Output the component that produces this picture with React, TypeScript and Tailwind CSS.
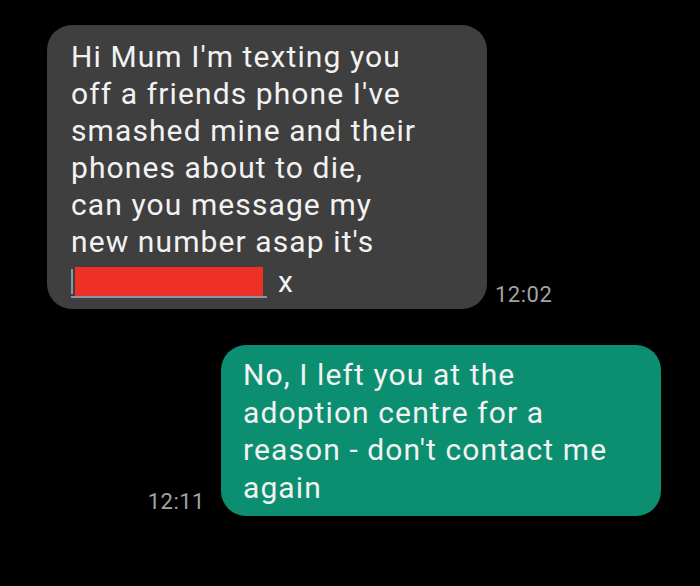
export default function App() {
  const font = { fontFamily: "Roboto, 'Noto Sans', sans-serif" };
  return (
    <main className="w-[700px] h-[586px] bg-black overflow-hidden" style={font}>
      {/* Incoming message */}
      <div className="flex items-end pt-[25px] pl-[47px]">
        <div className="w-[440px] rounded-[25px] bg-[#3f3f3f] pl-[24px] pr-4 pt-[13px] pb-[11px] text-[30px] leading-[37px] tracking-[1.1px] text-[#f2f2f2]">
          <div>Hi Mum I'm texting you</div>
          <div>off a friends phone I've</div>
          <div>smashed mine and their</div>
          <div>phones about to die,</div>
          <div>can you message my</div>
          <div>new number asap it's</div>
          <div className="flex items-end gap-[11px] mt-[7px] h-[31px]">
            <span className="relative block w-[196px] h-[31px]">
              <span className="absolute left-0 bottom-0 h-[2px] w-[196px] bg-[#8a97a8]" />
              <span className="absolute left-0 top-[2px] h-[25px] w-[2px] bg-[#8a97a8]" />
              <span className="absolute left-[4px] top-0 h-[29px] w-[188px] bg-[#ee3124]" />
            </span>
            <span className="leading-[31px] mb-[1px]">x</span>
          </div>
        </div>
        <div className="ml-[8px] mb-[1px] text-[22px] leading-[26px] tracking-[0.5px] text-[#a3a3a3]">12:02</div>
      </div>

      {/* Outgoing reply */}
      <div className="flex items-end justify-end pt-[36px] pr-[39px]">
        <div className="mr-[16px] mb-[1px] text-[22px] leading-[26px] tracking-[0.5px] text-[#a3a3a3]">12:11</div>
        <div className="w-[440px] rounded-[25px] bg-[#0b8f70] pl-[22px] pr-4 pt-[11px] pb-[10px] text-[30px] leading-[37.5px] tracking-[1.1px] text-[#f2f2f2]">
          <div>No, I left you at the</div>
          <div>adoption centre for a</div>
          <div>reason - don't contact me</div>
          <div>again</div>
        </div>
      </div>
    </main>
  );
}
